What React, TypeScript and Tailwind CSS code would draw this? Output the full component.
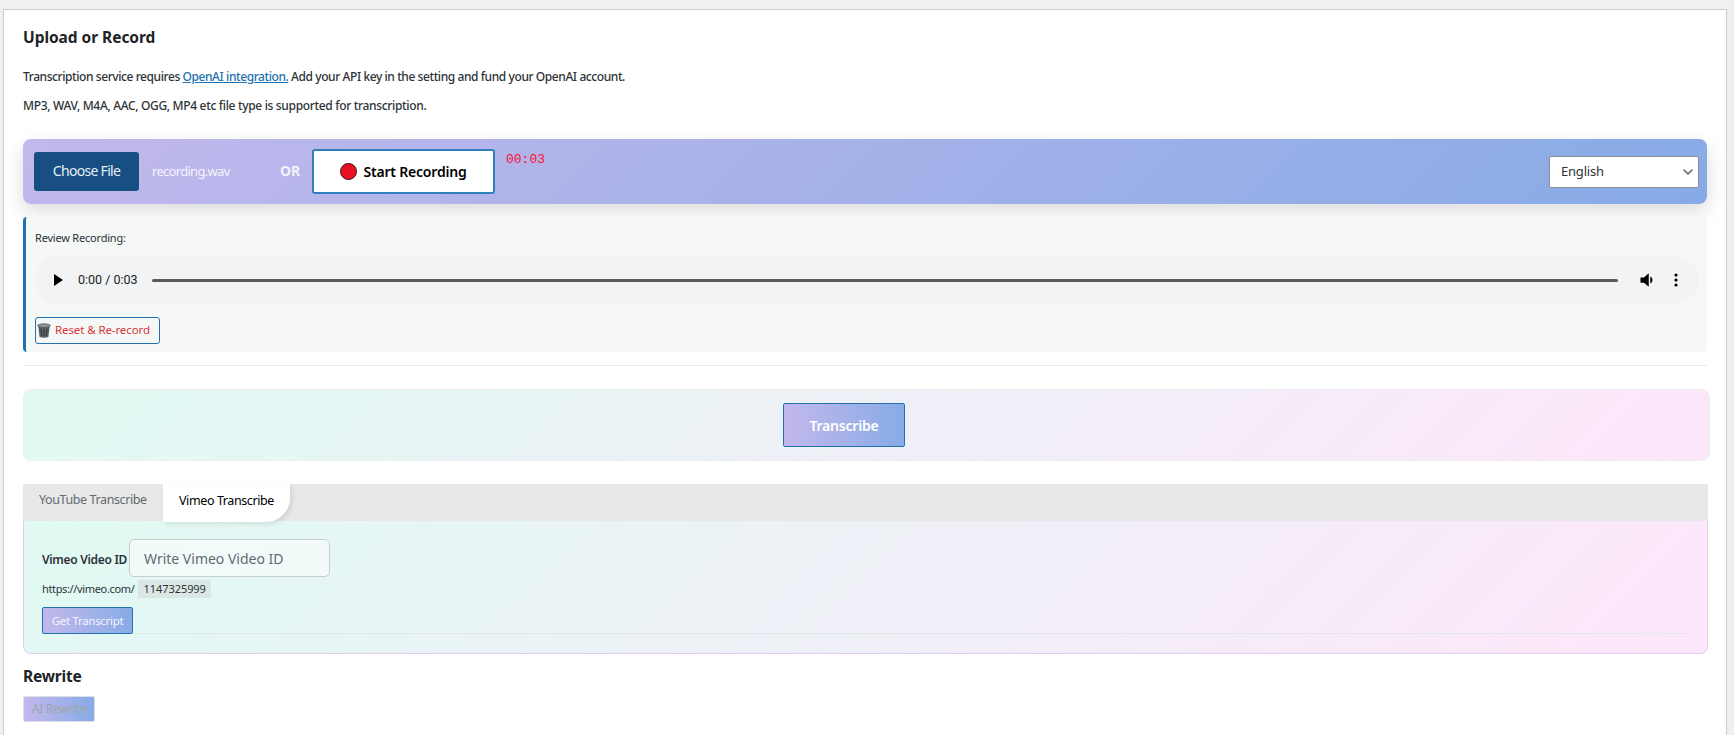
import React from "react";
import { ChevronDown } from "lucide-react";

const sans = "font-['Noto_Sans','Open_Sans',sans-serif]";

const App: React.FC = () => (
  <div className={`h-[735px] overflow-hidden bg-[#f0f0f1] pt-[9px] pl-[3px] pr-[7px] ${sans}`}>
    <div className="h-[760px] border border-[#c9cbcf] bg-white px-[19px] text-[#1d2327]">
      <h2 className="mt-[16px] text-[15.5px] leading-[22px] font-bold tracking-[-0.05px]">Upload or Record</h2>

      <p className="mt-[20px] text-[12px] leading-[18px] font-medium tracking-[-0.42px] text-[#2c3338]">
        Transcription service requires{" "}
        <a className="font-medium text-[#2271b1] underline">OpenAI integration.</a> Add your API key in the setting and
        fund your OpenAI account.
      </p>
      <p className="mt-[11px] text-[12px] leading-[18px] font-medium tracking-[-0.33px] text-[#2c3338]">
        MP3, WAV, M4A, AAC, OGG, MP4 etc file type is supported for transcription.
      </p>

      {/* upload bar */}
      <div className="mt-[24px] flex h-[65px] items-start rounded-lg bg-[linear-gradient(135deg,#c2b8ec,#87abe6)] pl-[11px] pr-[8px] shadow-[0_8px_20px_rgba(0,0,0,0.14)]">
        <button className="mt-[13px] h-[39px] w-[105px] rounded-[3px] bg-[#174f82] pb-[2px] text-[14px] tracking-[-0.7px] text-[#e8eef6]">
          Choose File
        </button>
        <span className="mt-[23px] ml-[13px] w-[128px] text-[13px] leading-[18px] tracking-[-0.7px] text-[#f4f4fd]">
          recording.wav
        </span>
        <span className="mt-[23px] w-[32px] text-[14px] leading-[18px] font-bold text-[#f2f2fc]">OR</span>
        <button className="mt-[10px] flex h-[45px] w-[183px] items-center justify-center gap-[6px] rounded-[3px] border-2 border-[#2f7fc1] bg-white text-[14px] font-semibold tracking-[-0.2px] text-black">
          <span className="h-[17px] w-[17px] rounded-full border border-[#3a1014] bg-[#e81123]" />
          Start Recording
        </button>
        <span className="mt-[12px] ml-[11px] font-['Liberation_Mono',monospace] text-[13px] leading-[18px] text-[#ff0d2d]">
          00:03
        </span>
        <div className="relative mt-[17px] ml-auto flex h-[32px] w-[150px] items-center rounded-[2px] border border-[#8c8f94] bg-white pl-[11px] text-[13px] tracking-[-0.2px] text-[#2c3338]">
          English
          <ChevronDown className="absolute right-[2px] h-[16px] w-[16px] text-[#50575e]" strokeWidth={2} />
        </div>
      </div>

      {/* review panel */}
      <div className="mt-[13px] h-[135px] rounded-[4px] border-l-[3px] border-[#2271b1] bg-[#f6f7f7] pt-[12px] pl-[9px] pr-[8px]">
        <p className="text-[11px] leading-[18px] tracking-[-0.2px] text-[#2c3338]">Review Recording:</p>
        <div className="mt-[9px] flex h-[48px] items-center rounded-[24px] bg-[#f1f3f4] pl-[18px] pr-[21px]">
          <svg className="h-[12px] w-[10px] fill-black" viewBox="0 0 10 12">
            <path d="M1 0 L10 6 L1 12 Z" />
          </svg>
          <span className="ml-[15px] font-['Roboto',sans-serif] text-[12.5px] whitespace-nowrap text-[#222]">
            0:00 / 0:03
          </span>
          <div className="ml-[14px] h-[3px] flex-1 rounded-full bg-[#595959]" />
          <svg className="ml-[21px] h-[18px] w-[18px] fill-black" viewBox="0 0 24 24">
            <path d="M2 8.5v7h4.5L13 21V3L6.5 8.5H2zm13 -1.2v9.4c1.8-.9 3-2.6 3-4.7s-1.2-3.8-3-4.7z" />
          </svg>
          <svg className="ml-[17px] h-[14px] w-[4px] fill-black" viewBox="0 0 4 14">
            <circle cx="2" cy="2" r="1.6" />
            <circle cx="2" cy="7" r="1.6" />
            <circle cx="2" cy="12" r="1.6" />
          </svg>
        </div>
        <button className="mt-[13px] flex h-[27px] w-[125px] items-center rounded-[3px] border border-[#2271b1] pb-[1px] text-[11.5px] tracking-[-0.1px] text-[#d63638]">
          <svg className="ml-[1px] h-[15px] w-[14px]" viewBox="0 0 14 15">
            <path d="M1.2 3 L2.6 14 Q7 15.4 11.4 14 L12.8 3 Z" fill="#5a6268" />
            <ellipse cx="7" cy="2.6" rx="6.4" ry="1.9" fill="#8b9298" stroke="#3f454a" strokeWidth="0.6" />
            <path d="M4 5.5 L4.6 13 M7 5.5 V13.4 M10 5.5 L9.4 13" stroke="#2c3136" strokeWidth="0.9" />
          </svg>
          <span className="ml-[4px]">Reset &amp; Re-record</span>
        </button>
      </div>

      <hr className="mt-[13px] border-[#e9eaeb]" />

      {/* transcribe box */}
      <div className="mt-[23px] mr-[-3px] flex h-[72px] items-center justify-center rounded-lg border border-[#eeeeee] bg-[linear-gradient(135deg,#e0faf3,#fde6fa)] pr-[45px]">
        <button className="h-[44px] w-[122px] rounded-[2px] border border-[#2271b1] bg-gradient-to-r from-[#c2b8ec] to-[#87abe6] text-[14px] font-semibold tracking-[-0.2px] text-white">
          Transcribe
        </button>
      </div>

      {/* tabs */}
      <div className="mt-[23px] mr-[-1px] flex h-[37px] bg-[#e8e8e8] text-[12.5px] tracking-[-0.4px]">
        <div className="flex h-[36px] w-[140px] items-center pb-[3px] pl-[16px] text-[#646970]">YouTube Transcribe</div>
        <div className="relative z-10 flex h-[38px] w-[127px] items-center justify-center rounded-br-[24px] bg-white pb-[3px] text-black shadow-[2px_2px_5px_rgba(0,0,0,0.1)]">
          Vimeo Transcribe
        </div>
      </div>
      <div className="mr-[-1px] h-[133px] rounded-b-lg border border-t-0 border-[#e2ccf2] bg-[linear-gradient(135deg,#e0faf3,#fde6fa)] pt-[18px] pl-[18px] pr-[18px]">
        <div className="flex items-center">
          <span className="mt-[4px] w-[87px] text-[12px] leading-[18px] font-semibold tracking-[-0.3px] whitespace-nowrap text-[#2c3338]">
            Vimeo Video ID
          </span>
          <div className="flex h-[38px] w-[201px] items-center rounded-[5px] border border-[#c9cccf] bg-white/50 pl-[14px] text-[14px] text-[#646970]">
            Write Vimeo Video ID
          </div>
        </div>
        <div className="mt-[3px] flex h-[18px] items-center text-[11px] tracking-[-0.35px] text-[#2c3338]">
          https://vimeo.com/
          <code className="ml-[4px] bg-[#dce7e5] px-[5px] font-['Noto_Sans',sans-serif] text-[11px] leading-[18px] tracking-[-0.05px]">
            1147325999
          </code>
        </div>
        <div className="mt-[9px] border-b border-[#e4e7ea]">
          <button className="mb-[-1px] block h-[27px] w-[91px] rounded-[2px] border border-[#2271b1] bg-gradient-to-r from-[#c2b8ec] to-[#87abe6] text-[11.5px] tracking-[-0.3px] text-[#f3f4fd]">
            Get Transcript
          </button>
        </div>
      </div>

      <h2 className="mt-[11px] text-[15.5px] leading-[22px] font-bold tracking-[-0.2px]">Rewrite</h2>
      <button className="mt-[9px] block h-[26px] w-[72px] rounded-[2px] border border-[#dcdfe6] bg-gradient-to-r from-[#c2b8ec] to-[#87abe6] text-[12px] tracking-[-0.3px] text-[#a0a5aa]">
        AI Rewrite
      </button>
    </div>
  </div>
);

export default App;
